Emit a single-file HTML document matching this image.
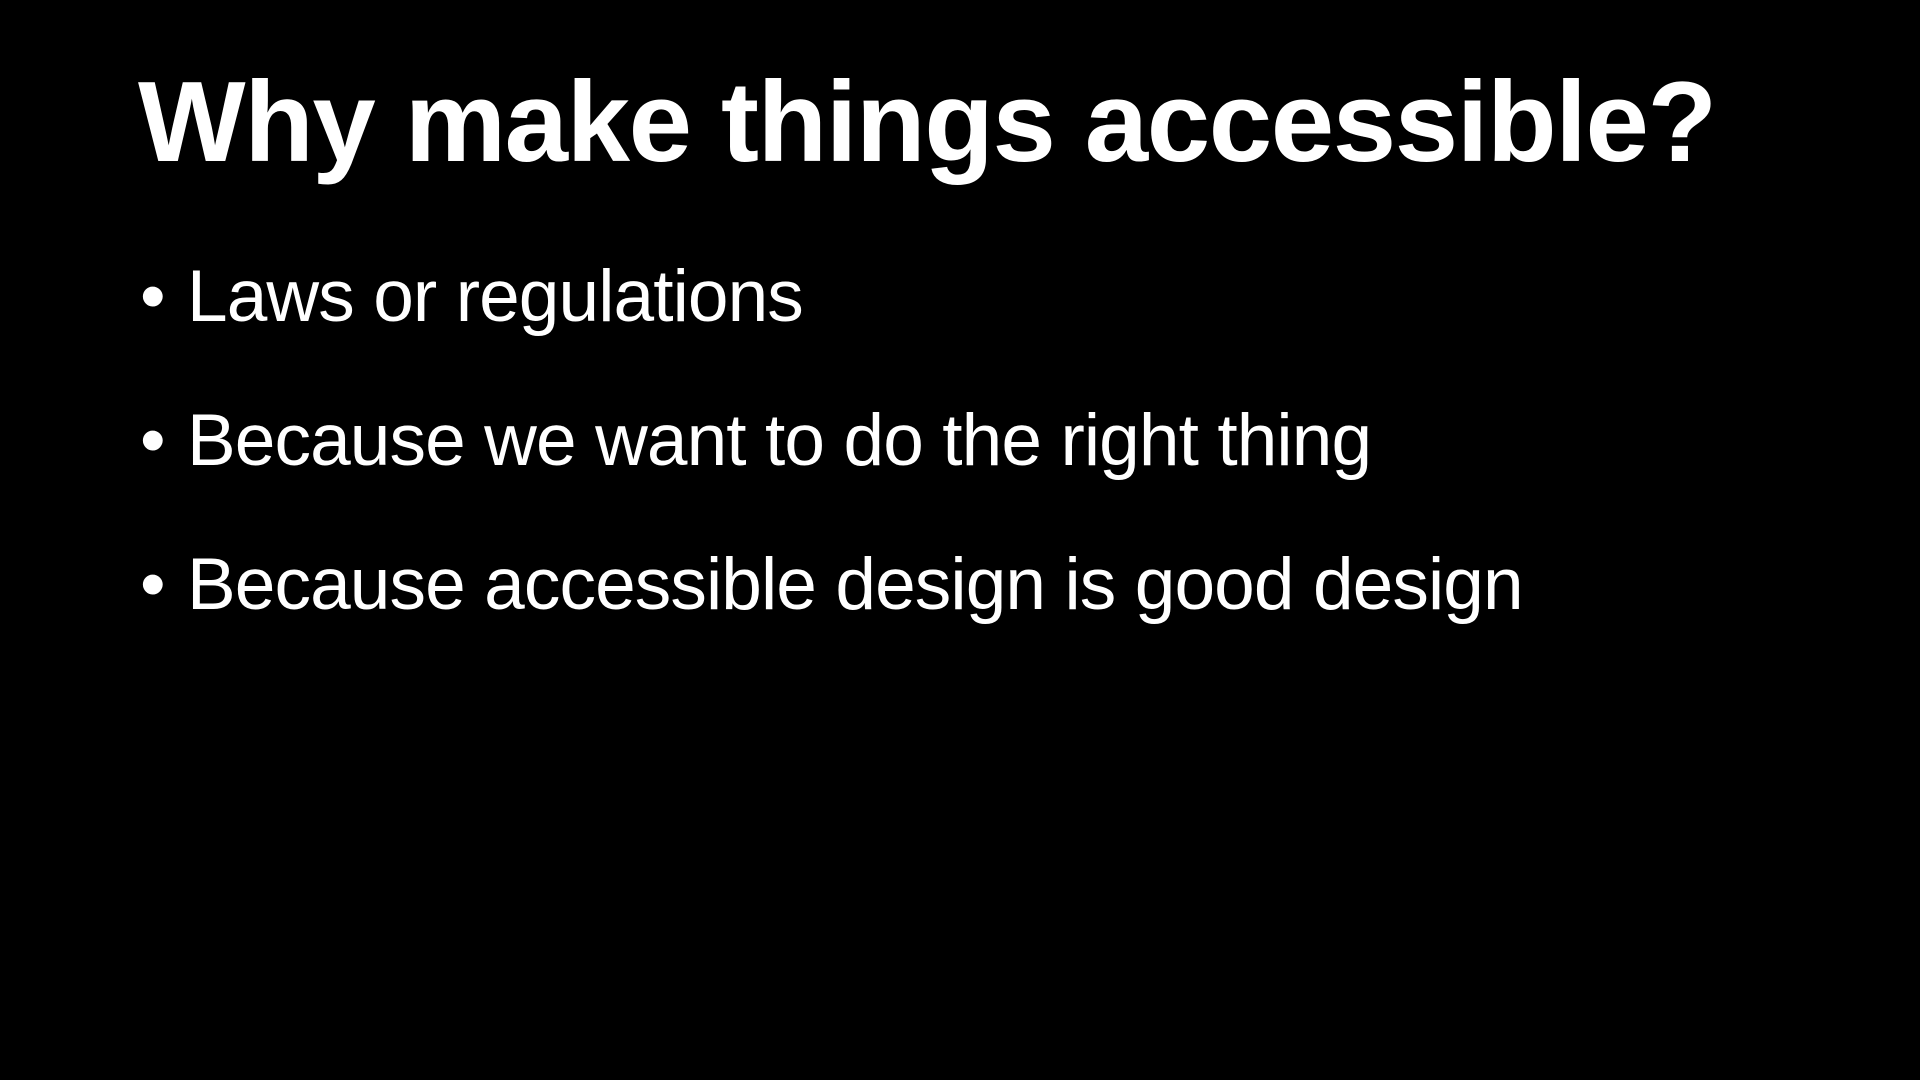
<!DOCTYPE html>
<html><head><meta charset="utf-8"><style>
html,body{margin:0;padding:0;background:#000;width:1920px;height:1080px;overflow:hidden}
.t{position:absolute;left:138px;top:66px;font:bold 114px/1 "Liberation Sans",sans-serif;color:#fff;white-space:nowrap;letter-spacing:-1.4px}
.b{position:absolute;left:140px;font:73px/1 "Liberation Sans",sans-serif;color:#fff;white-space:nowrap;letter-spacing:-0.9px}
.b span{display:inline-block;width:47px}
</style></head><body>
<div class="t">Why make things accessible?</div>
<div class="b" style="top:260px"><span>•</span>Laws or regulations</div>
<div class="b" style="top:404px"><span>•</span>Because we want to do the right thing</div>
<div class="b" style="top:548px"><span>•</span>Because accessible design is good design</div>
</body></html>
